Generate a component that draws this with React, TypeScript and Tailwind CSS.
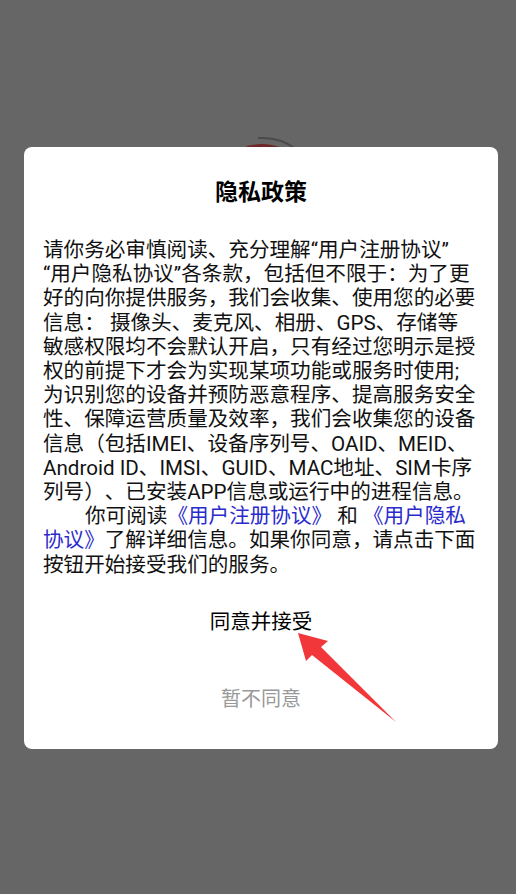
const bodyLines: { text: string; link?: [string, string, string, string] }[] = [
  { text: "请你务必审慎阅读、充分理解“用户注册协议”" },
  { text: "“用户隐私协议”各条款，包括但不限于：为了更" },
  { text: "好的向你提供服务，我们会收集、使用您的必要" },
  { text: "信息： 摄像头、麦克风、相册、GPS、存储等" },
  { text: "敏感权限均不会默认开启，只有经过您明示是授" },
  { text: "权的前提下才会为实现某项功能或服务时使用;" },
  { text: "为识别您的设备并预防恶意程序、提高服务安全" },
  { text: "性、保障运营质量及效率，我们会收集您的设备" },
  { text: "信息（包括IMEI、设备序列号、OAID、MEID、" },
  { text: "Android ID、IMSI、GUID、MAC地址、SIM卡序" },
  { text: "列号）、已安装APP信息或运行中的进程信息。" },
];

// Red pointer arrow drawn over the dialog
function PointerArrow() {
  return (
    <svg
      className="absolute left-[290px] top-[625px]"
      width="110"
      height="105"
      viewBox="290 625 110 105"
    >
      <polygon
        points="298,633 328,641 321,647 396,722 312,655 306,661"
        fill="#f2373a"
      />
    </svg>
  );
}

export default function App() {
  return (
    <div
      className="relative min-h-[894px] w-full overflow-hidden bg-[#666666] [text-spacing-trim:space-all]"
      style={{ fontFamily: 'Roboto, "Noto Sans CJK SC", sans-serif' }}
    >
      {/* dimmed logo / spinner behind the dialog */}
      <svg className="absolute left-[200px] top-[130px]" width="130" height="130" viewBox="200 130 130 130">
        <circle cx="262" cy="194" r="50" fill="#6e2626" />
        <path d="M 258 138.1 A 56 56 0 0 1 296 149" fill="none" stroke="#4a4a4a" strokeWidth="2" />
      </svg>

      <div className="relative ml-[24px] mt-[147px] flex h-[602px] w-[474px] flex-col rounded-[8px] bg-white px-[19px] pt-[32px]">
        <h1 className="text-center text-[23px] font-bold leading-[28px] text-black">隐私政策</h1>

        <div className="mt-[31px] text-[20.6px] leading-[24.2px] text-[#111]">
          {bodyLines.map((l) => (
            <div key={l.text} className="whitespace-nowrap">
              {l.text}
            </div>
          ))}
          <div className="whitespace-nowrap">
            <span className="pl-[42px]">你可阅读</span>
            <span className="text-[#2b2bcc]">《用户注册协议》</span>
            <span> 和 </span>
            <span className="text-[#2b2bcc]">《用户隐私</span>
          </div>
          <div className="whitespace-nowrap">
            <span className="text-[#2b2bcc]">协议》</span>了解详细信息。如果你同意，请点击下面
          </div>
          <div className="whitespace-nowrap">按钮开始接受我们的服务。</div>
        </div>

        <button className="mt-[30px] text-center text-[20.5px] leading-[30px] text-black">同意并接受</button>
        <button className="mt-[47px] text-center text-[20px] leading-[30px] text-[#999999]">暂不同意</button>
      </div>

      <PointerArrow />
    </div>
  );
}
